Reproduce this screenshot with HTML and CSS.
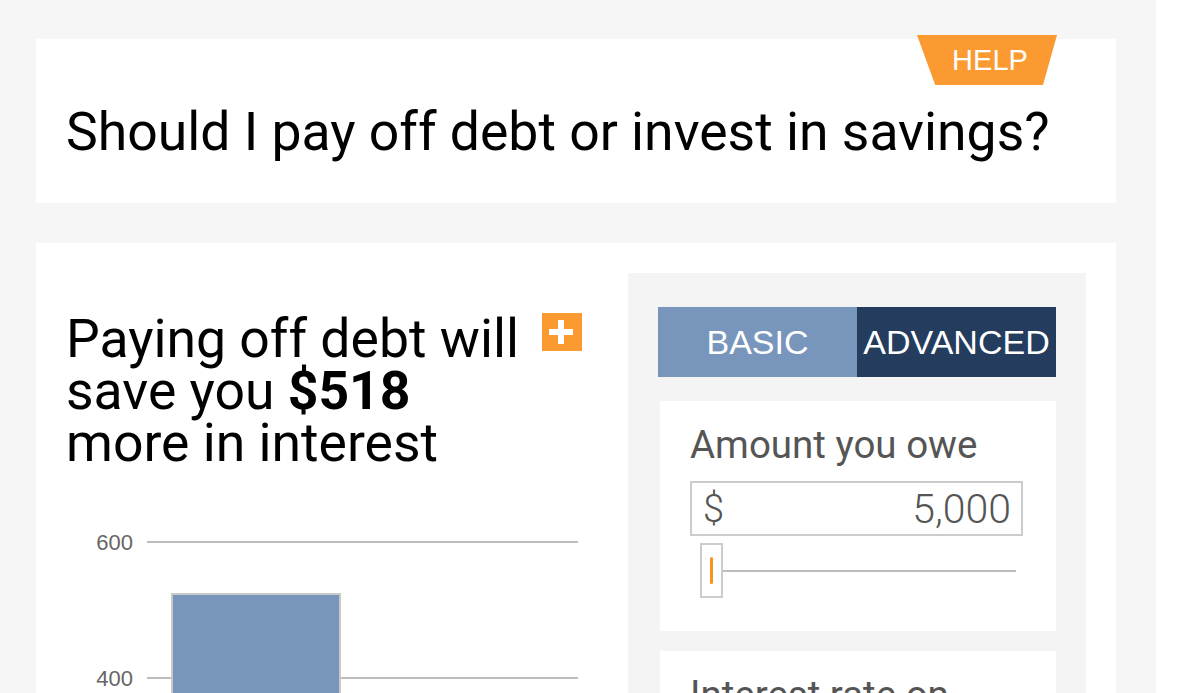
FILE: index.html
```html
<!DOCTYPE html>
<html lang="en">
<head>
    <meta charset="UTF-8">
    <meta name="viewport" content="width=device-width, initial-scale=1.0">
    <title>Should I pay off debt or invest in savings?</title>
    <link rel="stylesheet" href="styles.css">
</head>
<body>

<div class="page">
    <div class="title-card">
        <a class="help-tab" href="#">HELP</a>
        <h1>Should I pay off debt or invest in savings?</h1>
    </div>

    <div class="calc-card">
        <div class="results">
            <div class="result-head">
                <h2>Paying off debt will save you <strong>$518</strong> more in interest</h2>
                <button class="expand-btn" aria-label="More details">
                    <svg width="40" height="38" viewBox="0 0 40 38">
                        <rect width="40" height="38" fill="#fa9a31"/>
                        <rect x="7" y="16" width="24" height="6" fill="#fff"/>
                        <rect x="16" y="7" width="6" height="24" fill="#fff"/>
                    </svg>
                </button>
            </div>

            <svg class="chart" width="532" height="180" viewBox="0 0 532 180">
                <line x1="81" y1="22" x2="512" y2="22" stroke="#bdbdbd" stroke-width="2"/>
                <line x1="81" y1="158" x2="512" y2="158" stroke="#bdbdbd" stroke-width="2"/>
                <text x="67" y="30" text-anchor="end">600</text>
                <text x="67" y="166" text-anchor="end">400</text>
                <rect x="106" y="74" width="168" height="120" fill="#7896bb" stroke="#c8c8c8" stroke-width="2"/>
            </svg>
        </div>

        <div class="inputs">
            <div class="mode-tabs">
                <button class="mode-tab basic">BASIC</button>
                <button class="mode-tab advanced">ADVANCED</button>
            </div>

            <div class="field-card">
                <label for="owe">Amount you owe</label>
                <div class="money-input">
                    <span class="currency">$</span>
                    <input type="text" id="owe" value="5,000">
                </div>
                <div class="slider">
                    <span class="slider-handle"><span class="grip"></span></span>
                    <span class="slider-track"></span>
                </div>
            </div>

            <div class="field-card">
                <label for="rate">Interest rate on</label>
            </div>
        </div>
    </div>
</div>

</body>
</html>
```

FILE: styles.css
```css
* {
    margin: 0;
    padding: 0;
    box-sizing: border-box;
}
body {
    background: #fff;
    font-family: 'Roboto', 'Liberation Sans', sans-serif;
    overflow: hidden;
}
.page {
    width: 1156px;
    min-height: 100vh;
    background: #f6f6f6;
    padding: 39px 40px 0 36px;
}
.title-card {
    position: relative;
    background: #fff;
    padding: 61px 30px 0 30px;
    height: 164px;
}
.title-card h1 {
    font-size: 53.5px;
    font-weight: 400;
    line-height: 1.2;
    color: #000;
    white-space: nowrap;
}
.help-tab {
    position: absolute;
    top: -4px;
    right: 59px;
    width: 140px;
    height: 50px;
    background: #fa9a31;
    clip-path: polygon(0 0, 100% 0, 90% 100%, 13% 100%);
    color: #fff;
    text-decoration: none;
    font-family: 'Liberation Sans', Arial, sans-serif;
    font-size: 29px;
    line-height: 50px;
    text-align: center;
    padding-left: 6px;
}
.calc-card {
    display: flex;
    margin-top: 40px;
    background: #fff;
    padding: 30px 30px 0 30px;
    height: 460px;
}
.results {
    width: 532px;
    padding-top: 40px;
}
.result-head {
    display: flex;
    align-items: flex-start;
}
.result-head h2 {
    width: 476px;
    font-size: 53.5px;
    font-weight: 400;
    line-height: 52px;
    color: #000;
}
.result-head strong {
    font-weight: 700;
}
.expand-btn {
    border: none;
    background: none;
    line-height: 0;
    cursor: pointer;
}
.chart {
    display: block;
    margin-top: 51px;
}
.chart text {
    font-family: 'Liberation Sans', Arial, sans-serif;
    font-size: 22px;
    fill: #666;
}
.inputs {
    width: 458px;
    margin-left: 30px;
    background: #f4f4f4;
    padding: 34px 30px 0 30px;
}
.mode-tabs {
    display: flex;
    height: 70px;
}
.mode-tab {
    flex: 1;
    border: none;
    color: #fff;
    font-family: 'Liberation Sans', Arial, sans-serif;
    font-size: 34px;
    white-space: nowrap;
    cursor: pointer;
}
.mode-tab.basic {
    background: #7896bb;
}
.mode-tab.advanced {
    background: #243d5e;
}
.field-card {
    background: #fff;
    margin: 24px 0 0 2px;
    padding: 24px 30px 0 30px;
    height: 230px;
}
.field-card + .field-card {
    margin-top: 20px;
}
.field-card label {
    display: block;
    font-size: 38.5px;
    line-height: 40px;
    color: #555;
}
.money-input {
    display: flex;
    align-items: center;
    width: 333px;
    height: 55px;
    margin-top: 16px;
    border: 2px solid #ccc;
    padding: 0 10px 0 11px;
    color: #555;
}
.currency {
    font-size: 38px;
    font-weight: 300;
}
.money-input input {
    flex: 1;
    min-width: 0;
    border: none;
    outline: none;
    text-align: right;
    font-family: 'Roboto', 'Liberation Sans', sans-serif;
    font-size: 41px;
    font-weight: 300;
    color: #555;
    background: transparent;
}
.slider {
    display: flex;
    align-items: center;
    width: 326px;
    height: 55px;
    margin-top: 7px;
    padding-left: 10px;
}
.slider-handle {
    display: flex;
    justify-content: center;
    align-items: center;
    width: 23px;
    height: 55px;
    border: 2px solid #ccc;
    background: #fff;
}
.grip {
    width: 3px;
    height: 27px;
    border-radius: 2px;
    background: #f7931e;
}
.slider-track {
    flex: 1;
    height: 2px;
    background: #bdbdbd;
}
```
